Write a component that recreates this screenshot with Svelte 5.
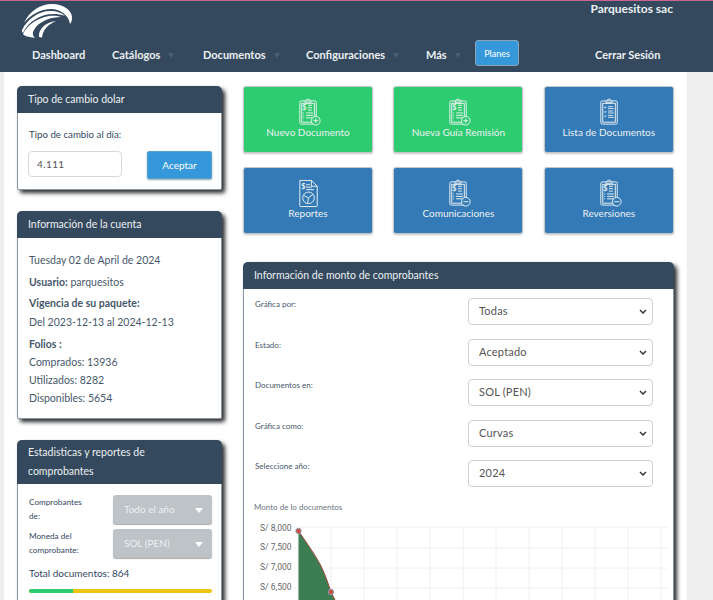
<script>
	const tiles = [
		{ label: 'Nuevo Documento', color: 'green', icon: 'plus' },
		{ label: 'Nueva Guía Remisión', color: 'green', icon: 'plus' },
		{ label: 'Lista de Documentos', color: 'blue', icon: 'list' },
		{ label: 'Reportes', color: 'blue', icon: 'report' },
		{ label: 'Comunicaciones', color: 'blue', icon: 'minus' },
		{ label: 'Reversiones', color: 'blue', icon: 'minus' }
	];

	const filters = [
		{ label: 'Gráfica por:', value: 'Todas' },
		{ label: 'Estado:', value: 'Aceptado' },
		{ label: 'Documentos en:', value: 'SOL (PEN)' },
		{ label: 'Gráfica como:', value: 'Curvas' },
		{ label: 'Seleccione año:', value: '2024' }
	];

	const menu = [
		{ label: 'Catálogos', width: 91 },
		{ label: 'Documentos', width: 103 },
		{ label: 'Configuraciones', width: 120 },
		{ label: 'Más', width: 49 }
	];

	const yTicks = ['S/ 8,000', 'S/ 7,500', 'S/ 7,000', 'S/ 6,500'];
	const gridX = [54, 87, 120, 153, 186, 219, 252, 285, 318, 351, 384, 417];
</script>

{#snippet clipboard(icon)}
	<svg class="ico" viewBox="0 0 30 30" width="30" height="30" fill="none" stroke="currentColor" stroke-width="1">
		{#if icon === 'report'}
			<path d="M5.500 1.500h12l6 6v20a1 1 0 0 1-1 1h-16a1 1 0 0 1-1-1z" />
			<path d="M17.500 1.500v6h6" />
			<text x="7" y="10" class="dollar">$</text>
			<path d="M12 6h4M12 8.500h6M12 11h8" />
			<circle cx="14.500" cy="19.500" r="6" />
			<path d="M9.500 17l5 2.500 4.500-3.500M14.500 19.500l-1 5.500" />
		{:else}
			<rect x="5.500" y="3" width="17" height="24" rx="1.500" />
			<rect x="7.500" y="5.500" width="13" height="19.500" />
			<path d="M11 3.500c0-1 1-1.500 3-2.500 2 1 3 1.500 3 2.500v1.500h-6z" />
			{#if icon === 'list'}
				<path d="M9 9.500l1 1 1-1.500M9 14l1 1 1-1.500M9 18.500l1 1 1-1.500" />
				<path d="M13 9h5M13 11h6M13 13.500h5M13 15.500h6M13 18h5M13 20h6" stroke-width=".9" />
			{:else}
				<text x="8" y="12.500" class="dollar">$</text>
				<path d="M14 7.500h4M14 10h4M14 12.500h4" />
				<path d="M9 15.500h1M9 18h1M9 20.500h1M12 15.500h7M12 18h7M12 20.500h7" />
				<circle cx="22" cy="23.500" r="4.500" fill={icon === 'plus' ? '#2ecc71' : '#337ab7'} />
				<path d={icon === 'plus' ? 'M19.500 23.500h5M22 21v5' : 'M19.500 23.500h5'} />
			{/if}
		{/if}
	</svg>
{/snippet}

<div class="page">
	<header>
		<div class="brand-row">
			<svg class="logo" viewBox="0 0 52 36" width="52" height="36">
				<path fill="#fff" d="M3 20C8 8 20 1 31 1c12 0 20 7 20 13 0 4-1 6-2 7-1-8-9-15-19-15C20 6 9 12 3 20z" />
				<path fill="#fff" d="M1 27C6 16 18 8 29 8c7 0 12 2 15 5-7-2.500-14-2.500-20-1C14 15 6 21 2 30c-1-1-1-2-1-3z" />
				<path fill="#fff" d="M2 31c4-9 14-16 26-18 5-.5 9 0 12 1-10 0-20 4-25 10-4 5-4 8-1 11-6-1-11-2-12-4z" />
				<path fill="#fff" d="M18 34c-1-7 6-15 17-16-7 3-13 8-14 16.500z" />
			</svg>
			<strong class="company">Parquesitos sac</strong>
		</div>
		<nav>
			<a class="link dash" href="#top">Dashboard</a>
			{#each menu as item}
				<a class="link" href="#top" style="width: {item.width}px">
					{item.label}<span class="caret"></span>
				</a>
			{/each}
			<button class="planes">Planes</button>
			<a class="link logout" href="#top">Cerrar Sesión</a>
		</nav>
	</header>

	<main>
		<aside>
			<section class="panel">
				<h2>Tipo de cambio dolar</h2>
				<div class="rate">
					<p>Tipo de cambio al día:</p>
					<div class="rate-row">
						<input value="4.111" />
						<button class="accept">Aceptar</button>
					</div>
				</div>
			</section>

			<section class="panel">
				<h2>Información de la cuenta</h2>
				<div class="account">
					<p class="date">Tuesday 02 de April de 2024</p>
					<p class="user"><b>Usuario:</b> parquesitos</p>
					<p class="head"><b>Vigencia de su paquete:</b></p>
					<p>Del 2023-12-13 al 2024-12-13</p>
					<p class="head folios"><b>Folios :</b></p>
					<p>Comprados: 13936</p>
					<p>Utilizados: 8282</p>
					<p>Disponibles: 5654</p>
				</div>
			</section>

			<section class="panel stats">
				<h2 class="tall">Estadisticas y reportes de comprobantes</h2>
				<div class="stats-body">
					<div class="stat-row">
						<span>Comprobantes de:</span>
						<div class="fake-select">Todo el año<i></i></div>
					</div>
					<div class="stat-row">
						<span>Moneda del comprobante:</span>
						<div class="fake-select">SOL (PEN)<i></i></div>
					</div>
					<p class="total">Total documentos: 864</p>
					<div class="bar"><div class="bar-green" style="width: 24%"></div></div>
				</div>
			</section>
		</aside>

		<div class="content">
			<div class="tiles">
				{#each tiles as tile}
					<a class="tile {tile.color}" href="#top">
						{@render clipboard(tile.icon)}
						<span>{tile.label}</span>
					</a>
				{/each}
			</div>

			<section class="panel chart-panel">
				<h2>Información de monto de comprobantes</h2>
				<div class="filters">
					{#each filters as f}
						<div class="filter">
							<label for={f.label}>{f.label}</label>
							<div class="select-wrap">
								<select id={f.label}><option>{f.value}</option></select>
								<svg class="chevron" viewBox="0 0 8 5" width="8" height="5">
									<path d="M1 1l3 3 3-3" fill="none" stroke="#343a40" stroke-width="1.500" />
								</svg>
							</div>
						</div>
					{/each}
				</div>
				<p class="chart-title">Monto de lo documentos</p>
				<svg class="chart" viewBox="0 0 429 85" width="429" height="85">
					{#each [10, 31, 51, 71] as y}
						<line x1="50" x2="424" y1={y} y2={y} class="grid" />
					{/each}
					{#each gridX as x}
						<line x1={x} x2={x} y1="10" y2="85" class="grid" />
					{/each}
					{#each yTicks as t, i}
						<text x="47.500" y={13.5 + i * 19.7} class="tick">{t}</text>
					{/each}
					<path d="M54.500 14C62 25 70 36 76.500 48 81 57 84 66 87 75L92 85H54.500z" fill="#3c7e52" />
					<path d="M54.500 14C62 25 70 36 76.500 48 81 57 84 66 87 75L92 85" fill="none" stroke="#a5443c" />
					<circle cx="54.500" cy="14" r="2.700" fill="#c4523a" stroke="#8fa0c8" stroke-width=".8" />
					<circle cx="87" cy="75" r="2.700" fill="#c4523a" stroke="#8fa0c8" stroke-width=".8" />
				</svg>
			</section>
		</div>
	</main>
</div>

<style>
	:global(body) {
		margin: 0;
		background: #eee;
		font-family: Lato, 'Open Sans', sans-serif;
		color: #34495e;
	}

	.page {
		height: 600px;
		overflow: hidden;
	}

	header {
		height: 71px;
		background: #34495e;
		border-top: 1px solid #c9648f;
		color: #ecf0f1;
	}

	.brand-row {
		height: 38px;
		display: flex;
		justify-content: space-between;
		align-items: flex-start;
		padding: 0 40px 0 21px;
		box-sizing: border-box;
	}

	.logo {
		margin-top: 2px;
	}

	.company {
		font-size: 12px;
		line-height: 15px;
	}

	nav {
		display: flex;
		align-items: center;
		height: 28px;
		padding-left: 32px;
	}

	.link {
		color: #ecf0f1;
		text-decoration: none;
		font-size: 11px;
		font-weight: 700;
		white-space: nowrap;
		flex: none;
		margin-top: 2px;
	}

	.dash {
		width: 80px;
	}

	.caret {
		display: inline-block;
		margin-left: 8px;
		border: 3.500px solid transparent;
		border-top: 5px solid #4a5f75;
		border-bottom: 0;
		vertical-align: 1px;
	}

	.planes {
		width: 44px;
		height: 26px;
		padding: 0;
		flex: none;
		background: #3498db;
		border: 1px solid #8fa3b5;
		border-radius: 3px;
		color: #fff;
		font: 400 9px Lato, sans-serif;
	}

	.logout {
		margin-left: 76px;
	}

	main {
		margin-left: 4px;
		width: 683px;
		height: 528px;
		box-sizing: border-box;
		background: #fff;
		padding: 14px 13px;
		display: grid;
		grid-template-columns: 205px 431px;
		column-gap: 21px;
		align-items: start;
	}

	aside {
		display: flex;
		flex-direction: column;
		gap: 21px;
	}

	.panel {
		background: #fff;
		border: 1px solid #8b97a3;
		border-top: 0;
		border-radius: 5px 5px 2px 2px;
		box-shadow: 3px 3px 4px #2b2b2b;
	}

	h2 {
		margin: 0 -1px;
		padding: 0 11px;
		height: 27px;
		background: #34495e;
		border-radius: 5px 5px 0 0;
		color: #ecf0f1;
		font-size: 10.500px;
		font-weight: 400;
		line-height: 26px;
	}

	h2.tall {
		height: 37px;
		padding-block: 3px 4px;
		line-height: 19px;
		box-sizing: content-box;
	}

	p {
		margin: 0;
	}

	.rate {
		padding: 15px 9px 10px 10px;
		font-size: 9.700px;
	}

	.rate p {
		margin-left: 1px;
	}

	.rate-row {
		display: flex;
		justify-content: space-between;
		margin-top: 11px;
	}

	input {
		width: 94px;
		height: 26px;
		box-sizing: border-box;
		border: 1px solid #d5d9dc;
		border-radius: 4px;
		padding: 0 8px;
		font: 10px Lato, sans-serif;
		letter-spacing: .4px;
		color: #555;
	}

	.accept {
		width: 65px;
		height: 28px;
		background: #3498db;
		border: 1px solid #5a9fcf;
		border-radius: 2px;
		box-shadow: 0 1px 2px #8aa;
		color: #fff;
		font: 400 10px Lato, sans-serif;
	}

	.account {
		padding: 13px 11px 10px;
		font-size: 10.500px;
		line-height: 18px;
		color: #46586a;
	}

	.account p {
		height: 18.200px;
	}

	.account .user {
		margin-top: 4px;
	}

	.account .head {
		margin-top: 3px;
	}

	.account .folios {
		margin-top: 4px;
	}

	.stats-body {
		padding: 11px 9px 10px 11px;
	}

	.stat-row {
		display: grid;
		grid-template-columns: 84px 99px;
		font-size: 8.200px;
		line-height: 14.500px;
		margin-bottom: 4px;
		height: 30px;
	}

	.stat-row span {
		width: 60px;
	}

	.fake-select {
		height: 29px;
		background: #bdc3c7;
		border-radius: 3px;
		box-shadow: 0 1px 1px #aaa;
		color: #ecf0f1;
		font-size: 10px;
		line-height: 29px;
		padding-left: 11px;
		position: relative;
	}

	.fake-select i {
		position: absolute;
		right: 9px;
		top: 13px;
		border: 4px solid transparent;
		border-top: 5px solid #fff;
		border-bottom: 0;
	}

	.total {
		margin-top: 8px;
		font-size: 10px;
	}

	.bar {
		margin-top: 10px;
		height: 4px;
		border-radius: 2px;
		background: #f1c40f;
		overflow: hidden;
	}

	.bar-green {
		height: 100%;
		background: #2ecc71;
	}

	.tiles {
		display: grid;
		grid-template-columns: repeat(3, 130px);
		grid-auto-rows: 67px;
		column-gap: 20.400px;
		row-gap: 13.500px;
	}

	.tile {
		display: flex;
		flex-direction: column;
		align-items: center;
		padding-top: 11px;
		box-sizing: border-box;
		border: 1px solid #c4c7c9;
		border-radius: 3px;
		color: #ecf0f1;
		text-decoration: none;
		font-size: 10px;
		box-shadow: 0 1px 2px #c4c7c9;
	}

	.tile span {
		margin-top: -2px;
		line-height: 14px;
	}

	.green {
		background: #2ecc71;
	}

	.blue {
		background: #337ab7;
	}

	.ico {
		display: block;
		margin-left: 2px;
		height: 29px;
	}

	.dollar {
		font: 700 7.500px Lato, sans-serif;
		fill: currentColor;
		stroke: none;
	}

	.chart-panel {
		margin-top: 28.500px;
		height: 500px;
	}

	.filters {
		padding: 9px 20px 0 11px;
		display: flex;
		flex-direction: column;
		gap: 13.500px;
	}

	.filter {
		display: flex;
		justify-content: space-between;
		height: 27px;
	}

	label {
		font-size: 8px;
		line-height: 13px;
		color: #46586a;
	}

	.select-wrap {
		position: relative;
	}

	select {
		display: block;
		width: 185px;
		height: 27px;
		padding: 0 10px 2px;
		appearance: none;
		background-color: #fff;
		border: 1px solid #ccd1d5;
		border-radius: 4px;
		font: 11px Lato, sans-serif;
		letter-spacing: .2px;
		color: #555;
	}

	.chevron {
		position: absolute;
		right: 6px;
		top: 11px;
	}

	.chart-title {
		margin: 15px 0 0 10px;
		font-size: 8px;
		color: #6a7682;
	}

	.chart {
		display: block;
		margin-top: 5px;
	}

	.grid {
		stroke: #f0f0f0;
	}

	.tick {
		font: 8.500px Roboto, 'Liberation Sans', sans-serif;
		fill: #666;
		text-anchor: end;
	}
</style>
